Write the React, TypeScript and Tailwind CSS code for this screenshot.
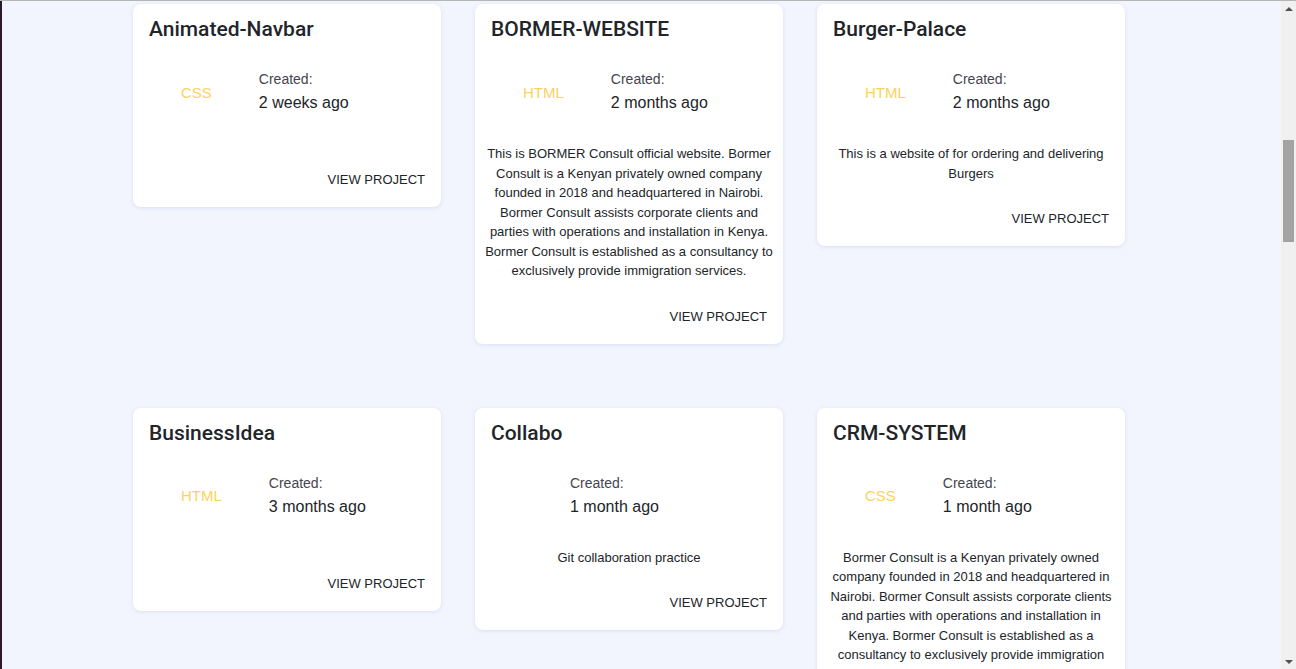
type Project = {
  name: string
  language: string
  created: string
  description: string
}

const projects: Project[] = [
  { name: 'Animated-Navbar', language: 'CSS', created: '2 weeks ago', description: '' },
  {
    name: 'BORMER-WEBSITE',
    language: 'HTML',
    created: '2 months ago',
    description:
      'This is BORMER Consult official website. Bormer Consult is a Kenyan privately owned company founded in 2018 and headquartered in Nairobi. Bormer Consult assists corporate clients and parties with operations and installation in Kenya. Bormer Consult is established as a consultancy to exclusively provide immigration services.',
  },
  {
    name: 'Burger-Palace',
    language: 'HTML',
    created: '2 months ago',
    description: 'This is a website of for ordering and delivering Burgers',
  },
  { name: 'BusinessIdea', language: 'HTML', created: '3 months ago', description: '' },
  { name: 'Collabo', language: '', created: '1 month ago', description: 'Git collaboration practice' },
  {
    name: 'CRM-SYSTEM',
    language: 'CSS',
    created: '1 month ago',
    description:
      'Bormer Consult is a Kenyan privately owned company founded in 2018 and headquartered in Nairobi. Bormer Consult assists corporate clients and parties with operations and installation in Kenya. Bormer Consult is established as a consultancy to exclusively provide immigration services.',
  },
]

function ProjectCard({ project }: { project: Project }) {
  return (
    <div className="flex flex-col rounded-lg bg-white px-2 pt-[11px] pb-[17px] shadow-[0_1px_4px_rgba(60,70,140,0.12)]">
      <h5 className="px-2 font-['Roboto',sans-serif] text-[21px] leading-7 font-medium text-[#212529]">
        {project.name}
      </h5>
      <div className="mt-[24px] flex items-center pl-10">
        <span className="mr-[47px] pt-1 text-[15px] text-[#fcd25e]">{project.language}</span>
        <div className="flex flex-col">
          <span className="text-[14px] leading-6 text-[#45454f]">Created:</span>
          <span className="text-[16px] leading-6 text-[#212529]">{project.created}</span>
        </div>
      </div>
      <p className="mt-[29px] text-center text-[13px] leading-[19.5px] text-[#212529]">
        {project.description}
      </p>
      <a href="#" className="mt-[26px] self-end pr-2 text-[13px] leading-5 text-[#212529] uppercase">
        View Project
      </a>
    </div>
  )
}

function ScrollBar() {
  return (
    <div className="flex w-[15px] flex-col items-center bg-[#f0f0f0]">
      <div className="flex h-[15px] items-center justify-center">
        <div className="h-0 w-0 border-x-[4px] border-b-[4px] border-x-transparent border-b-[#505050]" />
      </div>
      <div className="h-[124px]" />
      <div className="h-[102px] w-[11px] bg-[#a3a3a3]" />
      <div className="flex-1" />
      <div className="flex h-[15px] items-center justify-center">
        <div className="h-0 w-0 border-x-[4px] border-t-[4px] border-x-transparent border-t-[#505050]" />
      </div>
    </div>
  )
}

export default function App() {
  return (
    <div className="flex h-[669px] w-full flex-col overflow-hidden font-['Liberation_Sans',Arial,sans-serif]">
      <div className="h-px bg-[#b5b5b5]" />
      <div className="flex min-h-0 flex-1">
        <div className="w-[2px] bg-[#2b1b28]" />
        <main className="min-w-0 flex-1 overflow-hidden bg-[#f2f5fe] pt-[3px] pl-[131px]">
          <div className="grid w-[992px] grid-cols-3 items-start gap-x-[34px] gap-y-16">
            {projects.map((p) => (
              <ProjectCard key={p.name} project={p} />
            ))}
          </div>
        </main>
        <ScrollBar />
      </div>
    </div>
  )
}
